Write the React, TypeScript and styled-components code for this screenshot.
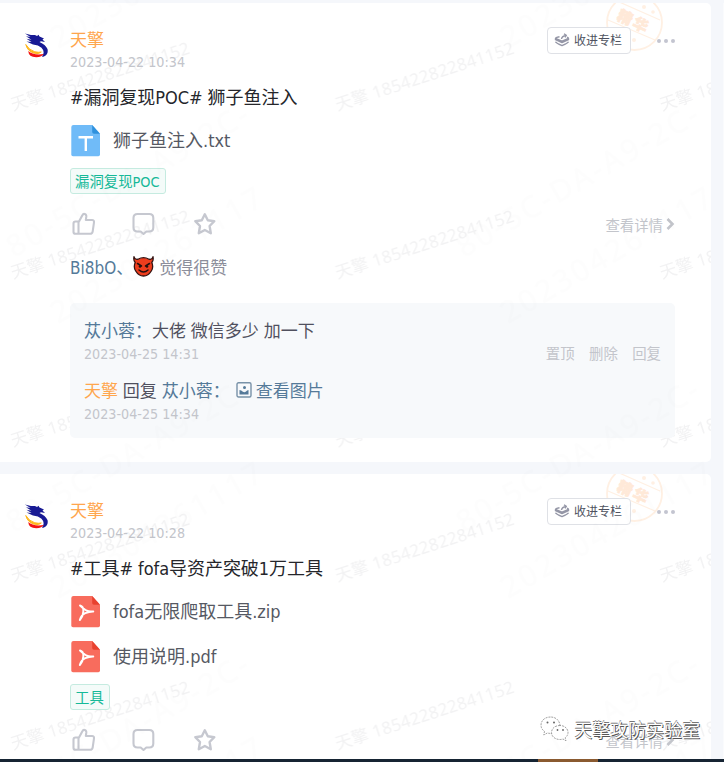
import React from "react";
import styled, { createGlobalStyle } from "styled-components";

const Global = createGlobalStyle`
  * { box-sizing: border-box; }
  body {
    margin: 0;
    background: #f5f7fb;
    font-family: "DejaVu Sans Condensed", "Noto Sans CJK SC", sans-serif;
    overflow: hidden;
  }
`;

const Page = styled.main`
  position: relative;
  display: flex;
  height: 762px;
  padding-top: 3px;
  gap: 12px;
  overflow: hidden;
`;

const Feed = styled.div`
  display: flex;
  flex-direction: column;
  gap: 12px;
  width: 711px;
  flex: none;
`;

const SideColumn = styled.aside`
  flex: 1;
  background: #fafbfd;
`;

const Card = styled.article<{ $height: number }>`
  position: relative;
  isolation: isolate;
  flex: none;
  height: ${(p) => p.$height}px;
  padding: 24px 36px 0 70px;
  background: #fff;
  border-radius: 0 5px 5px 0;
  overflow: hidden;
`;

const CardMark = styled.svg`
  position: absolute;
  inset: 0;
  z-index: -1;
  width: 100%;
  height: 100%;
  font-family: "Noto Sans", "Noto Sans CJK SC", sans-serif;
`;

const PageMark = styled.svg`
  position: absolute;
  inset: 0;
  width: 100%;
  height: 100%;
  pointer-events: none;
  font-family: "Noto Sans", sans-serif;
`;

const Avatar = styled.svg`
  position: absolute;
  left: 24px;
  top: 29px;
`;

const Stamp = styled.svg`
  position: absolute;
  left: 605px;
  top: -10px;
  z-index: -1;
`;

const Header = styled.header`
  display: flex;
  justify-content: space-between;
  height: 50px;
`;

const Author = styled.div`
  color: #ffa64d;
  font-size: 17px;
  line-height: 26px;
`;

const Stamped = styled.time`
  display: block;
  color: #c3c5cb;
  font-size: 14.2px;
  line-height: 18px;
  white-space: nowrap;
`;

const Actions = styled.div`
  display: flex;
  align-items: flex-start;
  gap: 26px;
`;

const CollectButton = styled.button`
  display: flex;
  align-items: center;
  gap: 4px;
  width: 84px;
  height: 27px;
  padding: 0 0 1px 6px;
  border: 1px solid #dfe1e6;
  border-radius: 4px;
  background: #fff;
  color: #4e5260;
  font: 12px/24px "Noto Sans CJK SC", sans-serif;
`;

const More = styled.div`
  display: flex;
  gap: 3px;
  padding-top: 12px;
  i { width: 4px; height: 4px; border-radius: 50%; background: #c3c5d0; }
`;

const Title = styled.h2`
  margin: 6px 0 0 0;
  color: #25262b;
  font-weight: 400;
  font-size: 18px;
  line-height: 30px;
  letter-spacing: -0.05px;
  white-space: nowrap;
`;

const File = styled.div`
  display: flex;
  align-items: center;
  gap: 12px;
  height: 45px;
  padding: 0 0 0 1px;
  color: #565963;
  font-size: 18px;
  line-height: 26px;
`;

const Files = styled.div`
  padding-top: 5px;
`;

const TagBox = styled.span`
  display: block;
  width: fit-content;
  height: 26px;
  margin-top: 5px;
  padding: 0 5px 0 4px;
  border: 1px solid #c5ebe0;
  border-radius: 3px;
  background: #f4fbf9;
  color: #16b998;
  font-size: 14.4px;
  line-height: 27px;
  white-space: nowrap;
`;

const Bar = styled.div`
  display: flex;
  align-items: center;
  justify-content: space-between;
  height: 26px;
  margin-top: 17px;
`;

const BarIcons = styled.div`
  display: flex;
  gap: 36px;
  padding-left: 1px;
`;

const Detail = styled.a`
  display: flex;
  align-items: center;
  gap: 3px;
  color: #c3c5cb;
  font-size: 14.4px;
`;

const Likes = styled.div`
  display: flex;
  align-items: center;
  height: 30px;
  margin-top: 14px;
  font-size: 17px;
  color: #8c8e9b;
  svg { margin: 0 5px 0 0; }
`;

const Name = styled.span<{ $owner?: boolean }>`
  color: ${(p) => (p.$owner ? "#ffa64d" : "#557a99")};
`;

const Comments = styled.section`
  display: flex;
  flex-direction: column;
  gap: 14px;
  height: 135px;
  margin-top: 22px;
  padding: 14px 14px;
  border-radius: 5px;
  background: #f7f9fb;
`;

const Comment = styled.div`
  color: #50505e;
  font-size: 17px;
  line-height: 26px;
  white-space: pre;
`;

const CommentText = styled.div`
  display: flex;
  align-items: center;
  height: 27px;
`;

const Picture = styled.span`
  display: flex;
  align-items: center;
  gap: 4px;
  margin-left: 6px;
  color: #557a99;
`;

const CommentFoot = styled.div`
  display: flex;
  justify-content: space-between;
  height: 19px;
  padding-top: 1px;
`;

const Ops = styled.div`
  display: flex;
  gap: 14.4px;
  color: #c3c5cb;
  font-size: 14.4px;
  line-height: 19px;
`;

const Brand = styled.div`
  position: absolute;
  left: 540px;
  top: 715px;
  display: flex;
  align-items: center;
  gap: 5px;
  color: #fff;
  font: 18px/28px "Noto Sans CJK SC", sans-serif;
  text-shadow: 1px 1px 0 #555, 0 -1px 0 #777;
  white-space: nowrap;
`;

const Taskbar = styled.div`
  position: absolute;
  inset: 759px 0 0 0;
  background: #162433;
  padding-left: 538px;
  &::before { content: ""; display: block; width: 60px; height: 3px; background: #8a5a30; }
`;

function AvatarArt() {
  return (
    <Avatar width="24" height="30" viewBox="0 0 24 30">
      <path d="M1 1.500l6 1.500 4 0 2 1 1.500-1.200 1 1.700 4.500 2-1.500 1 2.500 2.500-4-.8-1.500.8q6 2.500 8 7 1.200 5-3.500 7.500-1.500.5-2 .2 3.500-5-.5-9-3-2.700-8.500-3.200l-6.500-3 5 .5-5-3.200 5 1-5.500-3.500 4.500.8z" fill="#181a94" />
      <path d="M1.800 12.500q3 5.500 9 7.300 4 .8 6.500.2-2.500 2.500-7 1.200-7-2-8.500-8.700z" fill="#ffb81c" stroke="#ffb81c" />
      <path d="M4.200 19q5 4.500 15.500 3-1.500 3-7.500 3.200-7.500 0-8-6.200z" fill="#f31414" />
    </Avatar>
  );
}

function StampArt() {
  return (
    <Stamp width="60" height="60" viewBox="0 0 60 60">
      <g fill="none" stroke="#fff0e3">
        <circle cx="29.500" cy="29.500" r="27.500" strokeWidth="1.800" />
        <path d="M3 27L50 47M12 8L55 27" strokeWidth="1.200" />
      </g>
      <g fill="#fff0e3">
        <circle cx="39" cy="14" r="2" /><circle cx="48" cy="19" r="1.800" />
        <circle cx="18" cy="40" r="1.800" /><circle cx="29" cy="47" r="2" />
      </g>
      <text x="29" y="34" textAnchor="middle" transform="rotate(25 29 28)" fontSize="15" fontWeight="900" letterSpacing="2" fill="#ffe9d8" stroke="#ffe9d8" strokeWidth=".6" fontFamily="Noto Sans CJK SC">精华</text>
    </Stamp>
  );
}

function CollectIcon() {
  return (
    <svg width="16" height="14" viewBox="0 0 16 14" fill="none" stroke="#9496a6" strokeWidth="1.400" strokeLinejoin="round">
      <path d="M5.500 3.800Q1.500 4.500 1.500 5.500L8 8.200l6.500-2.700q0-.8-1.500-1.200M1.500 8.700Q2 10 8 12.600q6-2.600 6.500-3.900M1.500 5.500v1.200L8 9.500l6.500-2.800V5.500" />
      <path d="M7.500 6q.5-3 4.500-3.500M10 .8l2.300 1.600L11 4.400" />
    </svg>
  );
}

function FileIcon({ kind }: { kind: "txt" | "pdf" }) {
  const txt = kind === "txt";
  return (
    <svg width="30" height="32" viewBox="0 0 30 32">
      <path d="M2.500 0h18.700L29 8.800v20.700q0 1.700-1.700 1.700H2Q.3 31.200.3 29.500V2Q.3 0 2.500 0z" fill={txt ? "#70bbf8" : "#f86c5d"} />
      <path d="M21.200 0L29 8.800h-6q-1.800 0-1.800-1.800z" fill={txt ? "#2f91dd" : "#e8412f"} />
      {txt ? (
        <path d="M7.500 12.200h14.500M14.800 12.200V26" stroke="#fff" strokeWidth="2.400" fill="none" />
      ) : (
        <path d="M9 9.500q3.800 1 3.300 6 0 4.500-3.500 8.500 1.500-5 5.500-6.800t8-1.700q-5.500 0-7.800-1.500T9 9.500z" stroke="#fff" strokeWidth="1.900" fill="none" strokeLinejoin="round" />
      )}
    </svg>
  );
}

function LikeIcon() {
  return (
    <svg width="25" height="24" viewBox="0 0 25 24" fill="none" stroke="#c6c8d0" strokeWidth="2.100" strokeLinejoin="round">
      <path d="M8 9.500L11.500 3q.7-1.500 2.300-1 1.700.6 1.500 2.700L14.800 8H21q2.300 0 2 2.300l-1.300 9q-.4 2.500-2.700 2.500H4.500Q2.500 21.800 2.500 20v-8.500q0-2 2-2zM7.500 9.500v12.300" />
    </svg>
  );
}

function ChatIcon() {
  return (
    <svg width="24" height="24" viewBox="0 0 24 24" fill="none" stroke="#c6c8d0" strokeWidth="2.100" strokeLinejoin="round">
      <path d="M5.500 2h11.800q4 0 4 4v9.500q0 4-4 4h-3L11.500 22l-2.800-2.500H5.500q-4 0-4-4V6q0-4 4-4z" />
    </svg>
  );
}

function StarIcon() {
  return (
    <svg width="26" height="24" viewBox="0 0 26 24" fill="none" stroke="#c6c8d0" strokeWidth="2.400" strokeLinejoin="round">
      <path d="M12.800 2.200l3 6 6.500 1-4.700 4.800 1.200 7.200L12.800 18 6.800 21.200 8 14 3.300 9.200l6.500-1z" />
    </svg>
  );
}

function Devil() {
  return (
    <svg width="21" height="21" viewBox="0 0 21 21">
      <path d="M1 1q1 3 4 2.200 5.500-3 11 0Q19 4 20 1q.8 3-1.200 5.500 2 4.500-.5 8.500-3 5-7.800 5t-7.800-5Q.2 11 2.200 6.500.2 4 1 1z" fill="#ee3d1d" stroke="#351312" strokeWidth="1.300" />
      <path d="M4.500 7.500l4 2.500M16.500 7.500l-4 2.500M6 14q4.500 4 9 0" stroke="#25100f" strokeWidth="1.500" fill="none" strokeLinecap="round" />
      <circle cx="7" cy="10.500" r="1.300" fill="#25100f" /><circle cx="14" cy="10.500" r="1.300" fill="#25100f" />
    </svg>
  );
}

function PictureIcon() {
  return (
    <svg width="16" height="17" viewBox="0 0 16 17">
      <rect x="1" y=".7" width="14" height="14.300" rx="1.500" fill="none" stroke="#7892a8" strokeWidth="1.400" />
      <circle cx="8.500" cy="5.500" r="1.500" fill="#557a99" />
      <path d="M3.500 8q2 0 3 1.500 2 1.500 3.500 0Q11 8 12.500 8v4.500h-9z" fill="#557a99" />
    </svg>
  );
}

function WechatIcon() {
  return (
    <svg width="29" height="26" viewBox="0 0 29 26" fill="#fff" stroke="#888" strokeWidth=".8" strokeDasharray="2 1">
      <path d="M10.500 1C5 1 1 4.500 1 9q0 4 3.500 6.300L3.800 19l3.500-2q2 .5 4 .4 8-1 8.700-8C19.500 4.500 16 1 10.500 1z" />
      <path d="M20 9.500c-5 0-8.500 3-8.500 7s3.500 7 8.500 7q1.500 0 3-.5l3 1.800-.8-3Q28 19.500 28 16.500c0-4-3.500-7-8-7z" />
      <g fill="#666" stroke="none"><circle cx="7.500" cy="6.500" r="1" /><circle cx="14" cy="6.500" r="1" /><circle cx="17.500" cy="14" r=".9" /><circle cx="23" cy="14" r=".9" /></g>
    </svg>
  );
}

function UserMark({ id }: { id: string }) {
  return (
    <CardMark>
      <defs>
        <pattern id={id} width="324.500" height="168" patternUnits="userSpaceOnUse">
          <text x="13" y="108" transform="rotate(-18 13 108)" fontSize="17" textLength="187" fill="#f2f2f3">天擎 185422822841152</text>
        </pattern>
      </defs>
      <rect width="100%" height="100%" fill={`url(#${id})`} />
    </CardMark>
  );
}

function DeviceMark() {
  return (
    <PageMark>
      <defs>
        <pattern id="device" width="450" height="275" patternUnits="userSpaceOnUse">
          <g fontSize="30" fill="#000" fillOpacity=".006" letterSpacing="3">
            <text x="58" y="324" transform="rotate(-30 58 324)">202304261117</text>
            <text x="58" y="49" transform="rotate(-30 58 49)">202304261117</text>
            <text x="14" y="258" transform="rotate(-30 14 258)">80-5C-DA-A9-2C-</text>
          </g>
        </pattern>
      </defs>
      <rect width="100%" height="759" fill="url(#device)" />
    </PageMark>
  );
}

type PostProps = {
  id: string;
  height: number;
  date: string;
  title: string;
  files: { name: string; kind: "txt" | "pdf" }[];
  tag: string;
  children?: React.ReactNode;
};

function Post({ id, height, date, title, files, tag, children }: PostProps) {
  return (
    <Card $height={height}>
      <UserMark id={id} />
      <StampArt />
      <AvatarArt />
      <Header>
        <div>
          <Author>天擎</Author>
          <Stamped>{date}</Stamped>
        </div>
        <Actions>
          <CollectButton><CollectIcon />收进专栏</CollectButton>
          <More><i /><i /><i /></More>
        </Actions>
      </Header>
      <Title>{title}</Title>
      <Files>
        {files.map((f) => (
          <File key={f.name}><FileIcon kind={f.kind} /><span>{f.name}</span></File>
        ))}
      </Files>
      <TagBox>{tag}</TagBox>
      <Bar>
        <BarIcons><LikeIcon /><ChatIcon /><StarIcon /></BarIcons>
        <Detail>
          查看详情
          <svg width="9" height="12" viewBox="0 0 9 12" fill="none" stroke="#c3c5cb" strokeWidth="2.600"><path d="M1.500 1l5 5-5 5" /></svg>
        </Detail>
      </Bar>
      {children}
    </Card>
  );
}

export default function App() {
  return (
    <Page>
      <Global />
      <Feed>
        <Post id="mark-a" height={459} date="2023-04-22 10:34" title="#漏洞复现POC# 狮子鱼注入" files={[{ name: "狮子鱼注入.txt", kind: "txt" }]} tag="漏洞复现POC">
          <Likes><Name>Bi8bO、</Name><Devil />觉得很赞</Likes>
          <Comments>
            <Comment>
              <CommentText><Name>苁小蓉：</Name>大佬 微信多少 加一下</CommentText>
              <CommentFoot>
                <Stamped>2023-04-25 14:31</Stamped>
                <Ops><span>置顶</span><span>删除</span><span>回复</span></Ops>
              </CommentFoot>
            </Comment>
            <Comment>
              <CommentText>
                <Name $owner>天擎</Name> 回复 <Name>苁小蓉：</Name>
                <Picture><PictureIcon />查看图片</Picture>
              </CommentText>
              <CommentFoot><Stamped>2023-04-25 14:34</Stamped></CommentFoot>
            </Comment>
          </Comments>
        </Post>
        <Post id="mark-b" height={300} date="2023-04-22 10:28" title="#工具# fofa导资产突破1万工具" files={[{ name: "fofa无限爬取工具.zip", kind: "pdf" }, { name: "使用说明.pdf", kind: "pdf" }]} tag="工具" />
      </Feed>
      <SideColumn />
      <DeviceMark />
      <Brand><WechatIcon />天擎攻防实验室</Brand>
      <Taskbar />
    </Page>
  );
}
